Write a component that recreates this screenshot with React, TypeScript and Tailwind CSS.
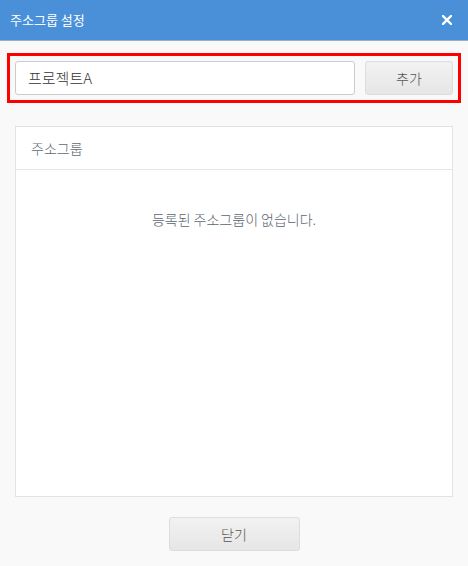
export default function App() {
  return (
    <div className="w-[468px] h-[566px] bg-[#f9f9f9] flex flex-col font-['Noto_Sans_CJK_KR','Noto_Sans',sans-serif]">
      {/* Header */}
      <div className="h-[41px] bg-[#4a90d9] border-b border-[#9aaec4] flex items-center justify-between pl-[10px] pr-[16px] shrink-0">
        <span className="text-white text-[13px] leading-none -mt-[2px]">주소그룹 설정</span>
        <svg width="10" height="10" viewBox="0 0 10 10" className="text-white">
          <path d="M1 1L9 9M9 1L1 9" stroke="currentColor" strokeWidth="2.4" strokeLinecap="square" />
        </svg>
      </div>

      {/* Input row */}
      <div className="mt-[12px] mx-[7px] border-[3px] border-[#ff0000] px-[5px] py-[5px] flex gap-[10px]">
        <div className="flex-1 h-[34px] bg-white border border-[#cccccc] rounded-[3px] flex items-center pl-[12px]">
          <span className="text-[15px] font-light text-[#333333]">프로젝트A</span>
        </div>
        <button className="w-[88px] h-[34px] rounded-[3px] border border-[#dddddd] bg-gradient-to-b from-[#f2f2f2] to-[#e6e6e6] text-[14px] font-light text-[#555555]">
          추가
        </button>
      </div>

      {/* Group panel */}
      <div className="mt-[23px] mx-[15px] h-[371px] bg-white border border-[#e3e3e3] flex flex-col">
        <div className="h-[43px] border-b border-[#e6e6e6] flex items-center pl-[15px]">
          <span className="text-[14px] font-light text-[#5d6a73]">주소그룹</span>
        </div>
        <div className="flex justify-center pt-[39px]">
          <span className="text-[14px] font-light text-[#5a6670]">등록된 주소그룹이 없습니다.</span>
        </div>
      </div>

      {/* Footer */}
      <div className="flex justify-center mt-[20px]">
        <button className="w-[131px] h-[34px] rounded-[3px] border border-[#dddddd] bg-gradient-to-b from-[#f2f2f2] to-[#e6e6e6] text-[14px] font-light text-[#555555]">
          닫기
        </button>
      </div>
    </div>
  );
}
